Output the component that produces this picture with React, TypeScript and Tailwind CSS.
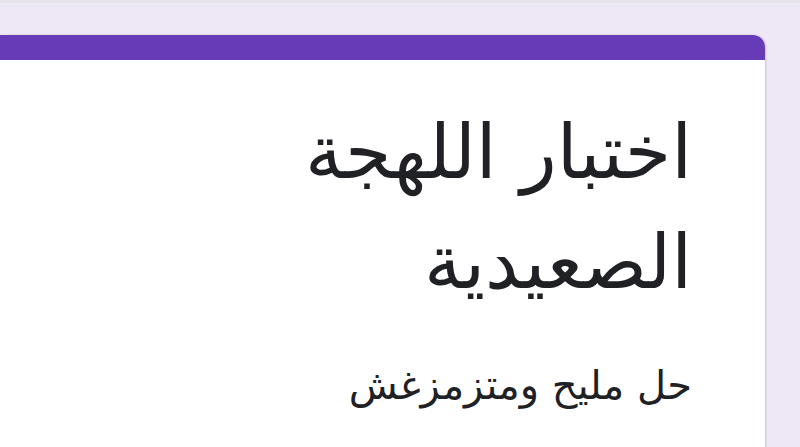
export default function App() {
  return (
    <div className="h-[447px] w-[800px] overflow-hidden bg-[#ede7f6]" style={{ fontFamily: '"DejaVu Sans", sans-serif' }}>
      <div className="h-[3px] bg-[#e6e4ea]" />
      <div className="pt-[32px] pr-[35px]">
        <div className="rounded-tr-[12px] bg-white shadow-[1px_0_2px_rgba(0,0,0,0.15)]">
          <div className="h-[25px] rounded-tr-[12px] bg-[#673ab7]" />
          <div dir="rtl" className="pr-[73px] pt-[37px] pb-[40px] text-right text-[#202124]">
            <h1 className="text-[75px] leading-[110px] font-normal">اختبار اللهجة<br />الصعيدية</h1>
            <p className="mt-[44px] text-[40px] leading-[48px]">حل مليح ومتزمزغش</p>
          </div>
        </div>
      </div>
    </div>
  );
}
